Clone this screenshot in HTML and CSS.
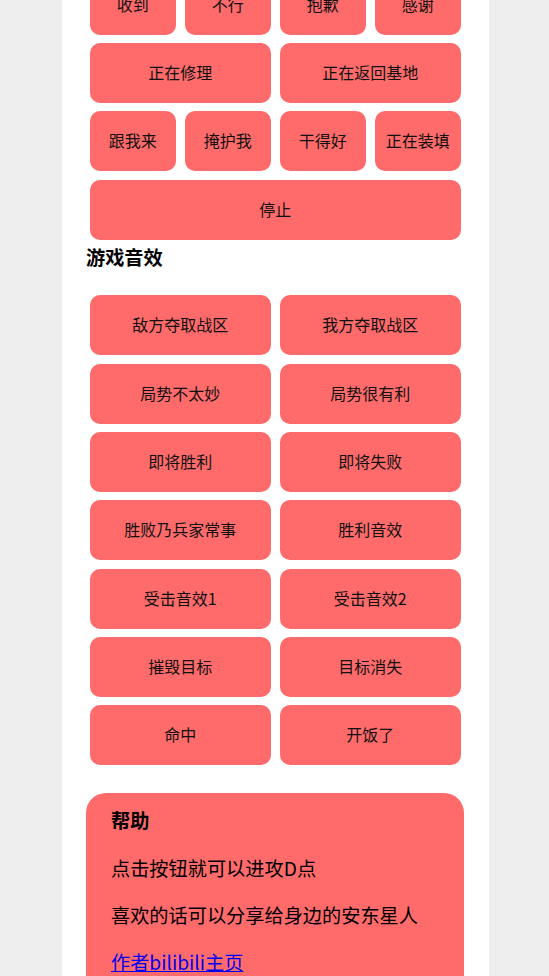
FILE: index.html
```html
<!DOCTYPE html>
<html lang="zh-CN">
<head>
<meta charset="utf-8">
<title>语音</title>
<link rel="stylesheet" href="styles.css">
</head>
<body>
<div class="page">
  <div class="grid voice">
    <button class="btn s1">收到</button>
    <button class="btn s1">不行</button>
    <button class="btn s1">抱歉</button>
    <button class="btn s1">感谢</button>
    <button class="btn s2">正在修理</button>
    <button class="btn s2">正在返回基地</button>
    <button class="btn s1">跟我来</button>
    <button class="btn s1">掩护我</button>
    <button class="btn s1">干得好</button>
    <button class="btn s1">正在装填</button>
    <button class="btn s4">停止</button>
  </div>
  <h3 class="section-title">游戏音效</h3>
  <div class="grid sounds">
    <button class="btn s2">敌方夺取战区</button>
    <button class="btn s2">我方夺取战区</button>
    <button class="btn s2">局势不太妙</button>
    <button class="btn s2">局势很有利</button>
    <button class="btn s2">即将胜利</button>
    <button class="btn s2">即将失败</button>
    <button class="btn s2">胜败乃兵家常事</button>
    <button class="btn s2">胜利音效</button>
    <button class="btn s2">受击音效1</button>
    <button class="btn s2">受击音效2</button>
    <button class="btn s2">摧毁目标</button>
    <button class="btn s2">目标消失</button>
    <button class="btn s2">命中</button>
    <button class="btn s2">开饭了</button>
  </div>
  <div class="help">
    <h3 class="help-title">帮助</h3>
    <p class="help-text">点击按钮就可以进攻D点</p>
    <p class="help-text">喜欢的话可以分享给身边的安东星人</p>
    <p class="help-text"><a class="help-link" href="#">作者bilibili主页</a></p>
  </div>
</div>
</body>
</html>
```
FILE: styles.css
```css
html, body {
  margin: 0;
  padding: 0;
}
body {
  background: #eeeeee;
  font-family: "Noto Sans CJK SC", "Noto Sans", sans-serif;
  color: #000;
  overflow: hidden;
  height: 976px;
}
.page {
  width: 427px;
  margin-left: 62px;
  box-sizing: border-box;
  padding: 0 25px 40px 24px;
  background: #ffffff;
  min-height: 1100px;
}
.grid {
  display: grid;
  grid-template-columns: repeat(4, 85.5px);
  column-gap: 9.5px;
  row-gap: 8.33px;
  margin: 0 4px;
}
.voice {
  margin-top: -25.33px;
}
.btn {
  height: 60px;
  border: none;
  border-radius: 10px;
  background: #ff6b6b;
  color: #111;
  font-family: "Noto Sans CJK SC", "Noto Sans", sans-serif;
  font-size: 16px;
  padding: 0 0 2px;
  margin: 0;
}
.s1 { grid-column: span 1; }
.s2 { grid-column: span 2; }
.s4 { grid-column: span 4; }
.section-title {
  font-size: 19.2px;
  font-weight: bold;
  margin: 4px 0 24px;
  line-height: 27.8px;
}
.sounds {
  margin-bottom: 28px;
}
.help {
  background: #ff6b6b;
  border-radius: 20px;
  padding: 14px 25px 20px;
}
.help-title {
  font-size: 19.2px;
  font-weight: bold;
  line-height: 27.8px;
  margin: 0 0 20px;
}
.help-text {
  font-size: 19.2px;
  line-height: 27.8px;
  margin: 19.2px 0;
}
.help-link {
  color: #0000ee;
  text-decoration: underline;
}
```
